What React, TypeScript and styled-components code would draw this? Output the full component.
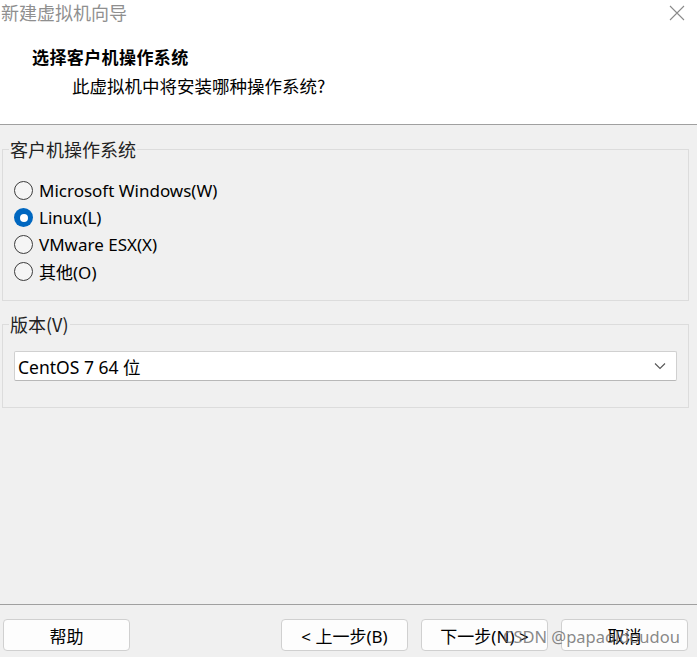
import React from "react";
import styled, { createGlobalStyle } from "styled-components";

const Global = createGlobalStyle`
  html, body { margin: 0; padding: 0; }
  body { background: #f0f0f0; font-family: "Noto Sans", "Noto Sans CJK SC", sans-serif; }
`;

const Window = styled.div`
  position: relative;
  width: 697px;
  height: 657px;
  display: flex;
  flex-direction: column;
  background: #f0f0f0;
  overflow: hidden;
`;

const Header = styled.header`
  background: #ffffff;
  height: 124px;
  border-bottom: 1px solid #a0a0a0;
  display: flex;
  flex-direction: column;
`;

const TitleRow = styled.div`
  height: 25px;
  display: flex;
  align-items: center;
  justify-content: space-between;
  padding: 0 12px 0 1px;
`;

const Title = styled.span`
  font-family: "Noto Sans CJK SC", sans-serif;
  font-size: 18px;
  color: #8f8f8f;
  line-height: 25px;
`;

const CloseIcon = styled.svg`
  width: 16px;
  height: 16px;
`;

const Heading = styled.h1`
  margin: 22px 0 0 32px;
  font-family: "Noto Sans CJK SC", serif;
  font-size: 17px;
  font-weight: 700;
  line-height: 20px;
  letter-spacing: 0.4px;
  color: #000;
`;

const SubHeading = styled.p`
  margin: 9px 0 0 72px;
  font-family: "Noto Sans CJK SC", sans-serif;
  font-size: 17.5px;
  line-height: 20px;
  color: #000;
`;

const Content = styled.main`
  flex: 1;
  display: flex;
  flex-direction: column;
  padding-top: 15px;
`;

const Group = styled.fieldset<{ $top?: number; $pt: number; $pb: number }>`
  margin: ${(p) => p.$top ?? 0}px 8px 0 2px;
  padding: ${(p) => p.$pt}px 11px ${(p) => p.$pb}px 11px;
  border: 1px solid #dcdcdc;
  min-width: 0;
`;

const Legend = styled.legend`
  margin-left: -5px;
  padding: 0 1px;
  font-family: "Noto Sans CJK SC", sans-serif;
  font-size: 18px;
  line-height: 18px;
  color: #222;
`;

const RadioRow = styled.label`
  display: flex;
  align-items: center;
  height: 27px;
  gap: 6px;
  font-size: 17px;
  color: #000;
  font-family: "Noto Sans", "Noto Sans CJK SC", sans-serif;
`;

const RadioCircle = styled.span<{ $checked?: boolean }>`
  width: 19px;
  height: 19px;
  box-sizing: border-box;
  border-radius: 50%;
  border: ${(p) => (p.$checked ? "none" : "1px solid #3c3c3c")};
  background: ${(p) => (p.$checked ? "#0067c0" : "#f5f5f5")};
  display: flex;
  align-items: center;
  justify-content: center;
  flex: none;
  &::after {
    content: "";
    display: ${(p) => (p.$checked ? "block" : "none")};
    width: 8px;
    height: 8px;
    border-radius: 50%;
    background: #fff;
  }
`;

const Select = styled.div`
  height: 30px;
  box-sizing: border-box;
  background: #fff;
  border: 1px solid #d0d0d0;
  border-bottom-color: #b8b8b8;
  border-radius: 2px;
  display: flex;
  align-items: center;
  justify-content: space-between;
  padding: 0 10px 0 3px;
  font-size: 17.5px;
  color: #000;
  font-family: "Noto Sans", "Noto Sans CJK SC", sans-serif;
`;

const Footer = styled.footer`
  border-top: 1px solid #a0a0a0;
  height: 53px;
  box-sizing: border-box;
  display: flex;
  justify-content: space-between;
  align-items: flex-start;
  padding: 14px 9px 0 3px;
`;

const ButtonGroup = styled.div`
  display: flex;
  gap: 13px;
`;

const Button = styled.button`
  width: 127px;
  height: 32px;
  box-sizing: border-box;
  background: #fdfdfd;
  border: 1px solid #d0d0d0;
  border-radius: 4px;
  font-family: "Noto Sans", "Noto Sans CJK SC", sans-serif;
  font-size: 17px;
  color: #000;
  padding: 0;
`;

const Watermark = styled.div`
  position: absolute;
  left: 503px;
  top: 625px;
  font-family: "Noto Sans", sans-serif;
  font-size: 16.5px;
  color: rgba(105, 105, 105, 0.8);
  pointer-events: none;
`;

const options = [
  { label: "Microsoft Windows(W)", checked: false },
  { label: "Linux(L)", checked: true },
  { label: "VMware ESX(X)", checked: false },
  { label: "其他(O)", checked: false },
];

export default function App() {
  return (
    <Window>
      <Global />
      <Header>
        <TitleRow>
          <Title>新建虚拟机向导</Title>
          <CloseIcon viewBox="0 0 16 16">
            <path d="M1 1 L15 15 M15 1 L1 15" stroke="#8a8a8a" strokeWidth="1.1" fill="none" />
          </CloseIcon>
        </TitleRow>
        <Heading>选择客户机操作系统</Heading>
        <SubHeading>此虚拟机中将安装哪种操作系统?</SubHeading>
      </Header>
      <Content>
        <Group $pt={19} $pb={15}>
          <Legend>客户机操作系统</Legend>
          {options.map((o) => (
            <RadioRow key={o.label}>
              <RadioCircle $checked={o.checked} />
              {o.label}
            </RadioRow>
          ))}
        </Group>
        <Group $top={14} $pt={18} $pb={26}>
          <Legend>版本(V)</Legend>
          <Select>
            <span>CentOS 7 64 位</span>
            <svg width="12" height="8" viewBox="0 0 12 8">
              <path d="M1 1.5 L6 6.5 L11 1.5" stroke="#555" strokeWidth="1.1" fill="none" />
            </svg>
          </Select>
        </Group>
      </Content>
      <Footer>
        <Button>帮助</Button>
        <ButtonGroup>
          <Button>&lt; 上一步(B)</Button>
          <Button>下一步(N) &gt;</Button>
          <Button>取消</Button>
        </ButtonGroup>
      </Footer>
      <Watermark>CSDN @papaoldoudou</Watermark>
    </Window>
  );
}
